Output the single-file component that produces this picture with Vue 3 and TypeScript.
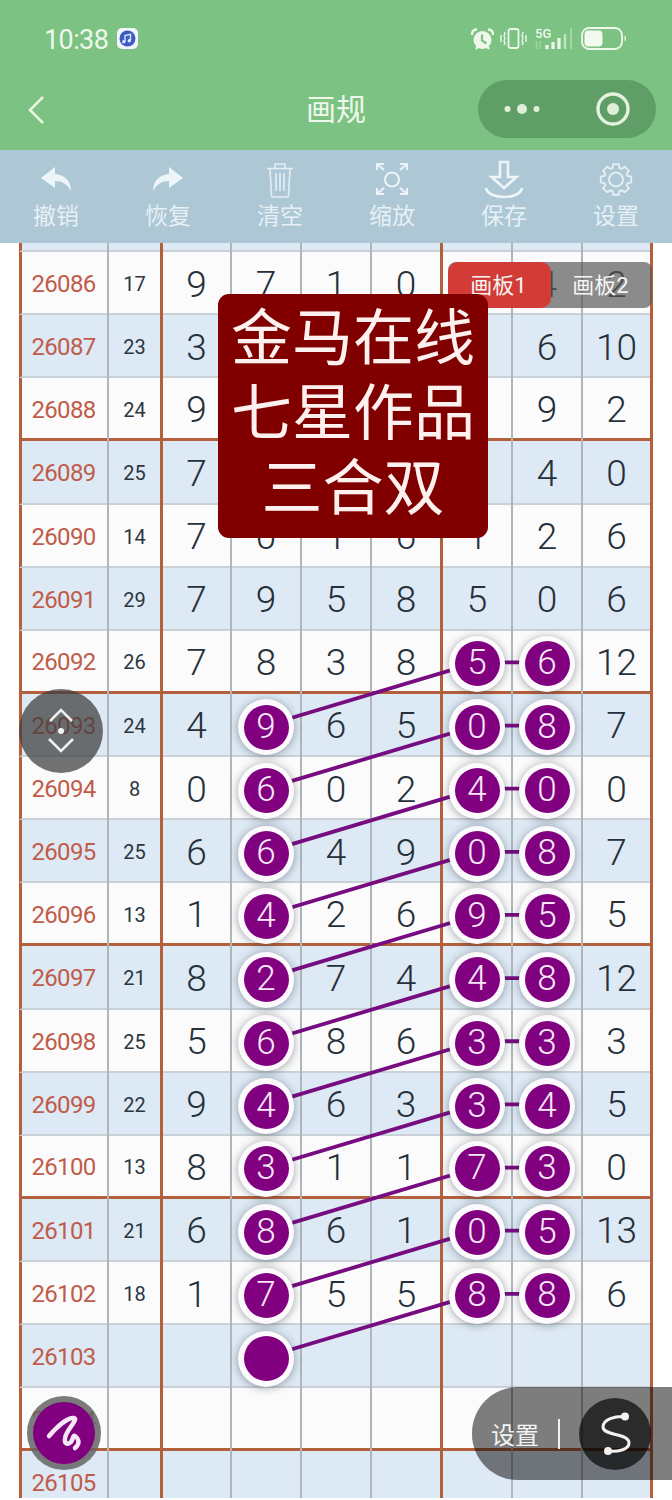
<script setup lang="ts">
import { computed } from 'vue'

interface Row { id: string; sum: string; vals: string[]; balls: number[] }

const raw: [string, string, string[], number[]][] = [
  ['26086', '17', ['9', '7', '1', '0', '', '4', '2'], []],
  ['26087', '23', ['3', '', '', '', '', '6', '10'], []],
  ['26088', '24', ['9', '', '', '', '', '9', '2'], []],
  ['26089', '25', ['7', '', '', '', '', '4', '0'], []],
  ['26090', '14', ['7', '0', '1', '6', '1', '2', '6'], []],
  ['26091', '29', ['7', '9', '5', '8', '5', '0', '6'], []],
  ['26092', '26', ['7', '8', '3', '8', '5', '6', '12'], [4, 5]],
  ['26093', '24', ['4', '9', '6', '5', '0', '8', '7'], [1, 4, 5]],
  ['26094', '8', ['0', '6', '0', '2', '4', '0', '0'], [1, 4, 5]],
  ['26095', '25', ['6', '6', '4', '9', '0', '8', '7'], [1, 4, 5]],
  ['26096', '13', ['1', '4', '2', '6', '9', '5', '5'], [1, 4, 5]],
  ['26097', '21', ['8', '2', '7', '4', '4', '8', '12'], [1, 4, 5]],
  ['26098', '25', ['5', '6', '8', '6', '3', '3', '3'], [1, 4, 5]],
  ['26099', '22', ['9', '4', '6', '3', '3', '4', '5'], [1, 4, 5]],
  ['26100', '13', ['8', '3', '1', '1', '7', '3', '0'], [1, 4, 5]],
  ['26101', '21', ['6', '8', '6', '1', '0', '5', '13'], [1, 4, 5]],
  ['26102', '18', ['1', '7', '5', '5', '8', '8', '6'], [1, 4, 5]],
  ['26103', '', ['', '', '', '', '', '', ''], [1]],
  ['26104', '', ['', '', '', '', '', '', ''], []],
  ['26105', '', ['', '', '', '', '', '', ''], []],
]

const rows: Row[] = raw.map(([id, sum, vals, balls]) => ({ id, sum, vals, balls }))
const ROW_H = 63.14
const TOP = 9
const cy = (i: number) => TOP + i * ROW_H + ROW_H / 2

const links = computed(() => {
  const out: { x1: number; y1: number; x2: number; y2: number }[] = []
  rows.forEach((r, i) => {
    if (r.balls.includes(4)) {
      out.push({ x1: 477, y1: cy(i), x2: 547, y2: cy(i) })
      out.push({ x1: 266, y1: cy(i + 1), x2: 477, y2: cy(i) })
    }
  })
  return out
})

const isBlue = (i: number) => i % 2 === 1
const isEnd = (id: string) => ['26088', '26092', '26096', '26100', '26104'].includes(id)

const tools = ['撤销', '恢复', '清空', '缩放', '保存', '设置']

const gear = computed(() => {
  const c = 16, n = 8
  let d = ''
  for (let k = 0; k < n; k++) {
    const a = (k / n) * Math.PI * 2 - Math.PI / 2
    const w = 0.19, s = 0.3
    const pts: [number, number][] = [
      [a - s, 12], [a - w, 15.5], [a + w, 15.5], [a + s, 12],
    ]
    pts.forEach(([t, r], j) => {
      const x = (c + Math.cos(t) * r).toFixed(1)
      const y = (c + Math.sin(t) * r).toFixed(1)
      d += (k === 0 && j === 0 ? 'M' : 'L') + x + ' ' + y + ' '
    })
  }
  return d + 'Z'
})
</script>

<template>
  <div class="page">
    <header class="top">
      <div class="status">
        <span class="time">10:38</span>
        <svg class="music" width="21" height="21" viewBox="0 0 21 21">
          <rect width="21" height="21" rx="5" fill="#f2f5fb" />
          <circle cx="10.5" cy="10.5" r="8" fill="#3d5cc0" />
          <path d="M8 13.5V7.500l5.500-1.200v6" fill="none" stroke="#dfe7fa" stroke-width="1.400" />
          <circle cx="6.800" cy="13.800" r="1.700" fill="#dfe7fa" />
          <circle cx="12.300" cy="12.800" r="1.700" fill="#dfe7fa" />
        </svg>
        <div class="status-right">
          <svg class="alarm" width="23" height="22" viewBox="0 0 23 22">
            <circle cx="11.5" cy="12" r="9" fill="#eef7ea" />
            <path d="M11 6.500v6l4.500 3" fill="none" stroke="#7bc283" stroke-width="2.200" />
            <path d="M1 7C1 3 3 1.500 6 1.500M22 7c0-4-2-5.500-5-5.500M5 21l2.500-3M18 21l-2.500-3" stroke="#eef7ea" stroke-width="2.400" fill="none" />
          </svg>
          <svg width="27" height="21" viewBox="0 0 27 21">
            <rect x="8.500" y="1" width="10" height="19" rx="2" fill="none" stroke="#eef7ea" stroke-width="1.800" />
            <path d="M4.500 4c1.500 2 -1.500 3 0 5s-1.500 3 0 5 -1 2 0 3M1 7v7M22.500 4c1.500 2 -1.500 3 0 5s-1.500 3 0 5 -1 2 0 3M26 7v7" fill="none" stroke="#eef7ea" stroke-width="1.400" />
          </svg>
          <div class="net">
            <span class="fiveg">5G</span>
            <svg width="38" height="22" viewBox="0 0 38 22">
              <path d="M1.500 13v8M5 13v8" stroke="#a6d6a6" stroke-width="1.400" />
              <path d="M12 21v-4M18 21v-7M24 21v-11" stroke="#eef7ea" stroke-width="3.200" />
              <path d="M30 21V6" stroke="#c2e3bf" stroke-width="2.400" />
              <path d="M36 21V0" stroke="#a6d6a6" stroke-width="2" />
            </svg>
          </div>
          <svg width="46" height="23" viewBox="0 0 46 23">
            <rect x="1" y="1" width="40" height="21" rx="7" fill="none" stroke="#eef7ea" stroke-width="1.800" />
            <rect x="3.500" y="3.500" width="18" height="16" rx="4" fill="#f4f9f0" />
            <path d="M43.500 8.500c2 1 2 5 0 6z" fill="#eef7ea" />
          </svg>
        </div>
      </div>
      <nav class="nav">
        <svg class="back" width="18" height="30" viewBox="0 0 18 30">
          <path d="M16 2 3 15l13 13" fill="none" stroke="#e8f6df" stroke-width="2.600" />
        </svg>
        <span class="title">画规</span>
        <div class="capsule">
          <svg width="36" height="12" viewBox="0 0 36 12">
            <circle cx="3.500" cy="6" r="3" fill="#dff0d8" />
            <circle cx="18" cy="6" r="5" fill="#dff0d8" />
            <circle cx="32.500" cy="6" r="3" fill="#dff0d8" />
          </svg>
          <svg width="34" height="34" viewBox="0 0 34 34">
            <circle cx="17" cy="17" r="15" fill="none" stroke="#e5f2de" stroke-width="3.400" />
            <circle cx="17" cy="17" r="6" fill="#dff0d8" />
          </svg>
        </div>
      </nav>
    </header>

    <div class="toolbar">
      <div v-for="(t, i) in tools" :key="t" class="tool">
        <svg class="tool-icon" width="40" height="40" viewBox="0 0 40 40">
          <path v-if="i === 0" d="M5 18 19 7v7c11 1 16 8 16 17-4-7-9-10-16-10v7z" fill="#eef5f8" />
          <path v-else-if="i === 1" d="M35 18 21 7v7C10 15 5 22 5 31c4-7 9-10 16-10v7z" fill="#eef5f8" />
          <g v-else-if="i === 2" fill="none" stroke="#e4eff4" stroke-width="1.600">
            <path d="M15 8V4h10v4M7 8.500h26M10 9l1.500 26c0 1 1 2 2 2h13c1 0 2-1 2-2L30 9M16 13v18M20 13v18M24 13v18" />
          </g>
          <g v-else-if="i === 3" fill="none" stroke="#eaf3f7" stroke-width="2.200">
            <circle cx="20" cy="19.500" r="7" />
            <path d="M5 10V4h7M5 4l7 6M28 4h7v6M35 4l-7 6M5 28v6h7M5 34l7-6M35 28v6h-7M35 34l-7-6" />
          </g>
          <g v-else-if="i === 4" fill="none" stroke="#eef5f8" stroke-width="2.600">
            <path d="M16 2h8v15h8.500L20 28 7.500 17H16zM2 28c2 12 34 12 36 0" />
          </g>
          <g v-else fill="none" stroke="#e4eff4" stroke-width="1.900" transform="translate(4 3.500)">
            <path :d="gear" />
            <circle cx="16" cy="16" r="7" />
          </g>
        </svg>
        <span class="tool-label">{{ t }}</span>
      </div>
    </div>

    <main class="board">
      <div class="row stub blue">
        <div v-for="n in 9" :key="n" class="cell" :class="'c' + n"></div>
      </div>
      <div
        v-for="(r, i) in rows"
        :key="r.id"
        class="row"
        :class="{ blue: isBlue(i), end: isEnd(r.id) }"
      >
        <div class="cell c1 rid">{{ r.id }}</div>
        <div class="cell c2 sum">{{ r.sum }}</div>
        <div v-for="(v, k) in r.vals" :key="k" class="cell val" :class="'c' + (k + 3)">
          <span v-if="r.balls.includes(k)" class="ball"><span class="ball-in">{{ v }}</span></span>
          <template v-else>{{ v }}</template>
        </div>
      </div>
      <svg class="links" width="672" height="1257" viewBox="0 0 672 1257">
        <line
          v-for="(l, i) in links"
          :key="i"
          :x1="l.x1"
          :y1="l.y1"
          :x2="l.x2"
          :y2="l.y2"
          stroke="#760c80"
          stroke-width="3.800"
        />
      </svg>
    </main>

    <div class="tabs">
      <span class="tab on">画板1</span>
      <span class="tab">画板2</span>
    </div>

    <div class="banner">
      <div>金马在线</div>
      <div>七星作品</div>
      <div>三合双</div>
    </div>

    <div class="updown">
      <svg width="84" height="84" viewBox="0 0 84 84">
        <path d="M31 32l11-11 11 11M30 50l12 12 12-12" fill="none" stroke="#eef0f0" stroke-width="2.600" />
        <circle cx="42" cy="42" r="3" fill="#f4f4f4" />
      </svg>
    </div>

    <div class="brush">
      <div class="brush-in">
        <svg width="62" height="62" viewBox="0 0 62 62">
          <path d="M16 34C22 27 34 15 41 16 46 17 33 28 32 36 31 42 35 43 38 40 40 37 40 33 42 34 45 36 48 41 42 46" fill="none" stroke="#f6e6f6" stroke-width="4.500" stroke-linecap="round" stroke-linejoin="round" />
        </svg>
      </div>
    </div>

    <div class="setbar">
      <span class="set-text">设置</span>
      <span class="set-div"></span>
      <div class="s-btn">
        <svg width="72" height="72" viewBox="0 0 72 72">
          <path d="M46 18.500C36 18 24 21 24 29 24 38 50 35 50 45 50 52 38 54 29 53" fill="none" stroke="#f2f2f2" stroke-width="3" />
          <circle cx="46" cy="18.500" r="4" fill="#f2f2f2" />
          <circle cx="29" cy="53" r="4" fill="#f2f2f2" />
        </svg>
      </div>
    </div>
  </div>
</template>

<style>
html, body { margin: 0; background: #fff; }
</style>

<style scoped>
.page {
  position: relative;
  width: 672px;
  height: 1500px;
  overflow: hidden;
  background: #fff;
  font-family: Roboto, "Noto Sans CJK SC", sans-serif;
}
.top {
  height: 150px;
  background: #7bc283;
  display: flex;
  flex-direction: column;
  color: #eef7ea;
}
.status {
  height: 80px;
  display: flex;
  align-items: center;
  padding: 0 45px 3px 44px;
  box-sizing: border-box;
}
.time { font-size: 27px; letter-spacing: -0.6px; width: 73px; padding-top: 2px; }
.music { flex: none; }
.status-right { margin-left: auto; display: flex; align-items: center; gap: 8px; }
.alarm { margin-right: -2px; }
.net { position: relative; width: 38px; height: 22px; }
.fiveg { position: absolute; left: 0; top: -1px; font-size: 13px; font-weight: 500; line-height: 13px; z-index: 1; }
.net svg { display: block; }
.nav {
  position: relative;
  height: 70px;
  display: flex;
  align-items: flex-start;
  justify-content: space-between;
  padding: 0 16px 0 27px;
}
.back { margin-top: 15px; }
.title {
  position: absolute;
  left: 0;
  right: 0;
  top: 8px;
  text-align: center;
  font-size: 30px;
  line-height: 44px;
}
.capsule {
  width: 178px;
  height: 58px;
  border-radius: 29px;
  background: #5f9e66;
  display: flex;
  align-items: center;
  justify-content: space-between;
  padding: 0 26px 0 26px;
  box-sizing: border-box;
}
.toolbar {
  height: 93px;
  background: #adc7d5;
  display: grid;
  grid-template-columns: repeat(6, 112px);
}
.tool { display: flex; flex-direction: column; align-items: center; padding-top: 10px; }
.tool-icon { display: block; }
.tool-label { font-size: 23px; line-height: 32px; color: #e6f0f5; margin-top: 1px; }

.board { position: relative; height: 1255px; overflow: hidden; }
.row {
  height: 63.14px;
  box-sizing: border-box;
  margin-left: 19px;
  width: 634px;
  display: grid;
  grid-template-columns: 87px 54px 69px 70px 70px 71px 70px 70px 70px;
  background: #fbfbfb;
  border-left: 3px solid #b5603c;
  border-bottom: 2px solid #c9d1d7;
}
.row.stub { height: 9px; }
.row.blue { background: #dde9f4; }
.row.end { border-bottom: 3px solid #b5603c; }
.cell {
  box-sizing: border-box;
  border-right: 2px solid #aeb6bc;
  display: flex;
  align-items: center;
  justify-content: center;
  min-width: 0;
  margin-bottom: -3px;
}
.c2, .c6, .c9 { border-right: 3px solid #b5603c; }
.rid { font-size: 24px; color: #c05c4a; letter-spacing: -0.7px; padding-right: 2px; }
.sum { font-size: 20px; color: #2b3640; }
.val { font-size: 37px; font-weight: 350; color: #25303a; }
.ball {
  position: relative;
  z-index: 2;
  width: 56px;
  height: 56px;
  margin-top: 3px;
  border-radius: 50%;
  background: #fdfafd;
  box-shadow: 0 1px 9px rgba(40, 50, 60, 0.45);
  display: flex;
  align-items: center;
  justify-content: center;
}
.ball-in {
  width: 45px;
  height: 45px;
  border-radius: 50%;
  background: #800080;
  color: #f6e8f6;
  font-size: 35px;
  font-weight: 350;
  line-height: 44px;
  text-align: center;
}
.links { position: absolute; left: 0; top: 0; z-index: 1; pointer-events: none; }

.tabs {
  position: absolute;
  left: 448px;
  top: 262px;
  width: 204px;
  height: 46px;
  display: flex;
  border-radius: 8px;
  background: rgba(85, 85, 85, 0.68);
  color: #f5f5f5;
  font-size: 22px;
}
.tab {
  flex: 1;
  display: flex;
  align-items: center;
  justify-content: center;
  border-radius: 10px;
  padding: 0 2px 4px 0;
}
.tab.on { flex: none; width: 103px; box-sizing: border-box; background: #d33b36; }
.banner {
  position: absolute;
  left: 218px;
  top: 294px;
  width: 270px;
  height: 244px;
  box-sizing: border-box;
  padding-top: 8px;
  border-radius: 11px;
  background: #800000;
  color: #fdf0ee;
  font-size: 61px;
  line-height: 75px;
  text-align: center;
}
.updown {
  position: absolute;
  left: 19px;
  top: 689px;
  width: 84px;
  height: 84px;
  border-radius: 50%;
  background: rgba(60, 60, 60, 0.72);
}
.updown svg { display: block; }
.brush {
  position: absolute;
  left: 27px;
  top: 1396px;
  width: 74px;
  height: 74px;
  border-radius: 50%;
  background: rgba(100, 100, 100, 0.85);
  display: flex;
  align-items: center;
  justify-content: center;
}
.brush-in {
  width: 62px;
  height: 62px;
  border-radius: 50%;
  background: #800080;
}
.brush-in svg { display: block; }
.setbar {
  position: absolute;
  left: 472px;
  right: 0;
  top: 1387px;
  height: 93px;
  border-radius: 46px 0 0 46px;
  background: rgba(0, 0, 0, 0.5);
  display: flex;
  align-items: center;
  color: #f2f2f2;
}
.set-text { font-size: 24px; margin-left: 19px; }
.set-div { width: 2px; height: 30px; background: #f2f2f2; margin-left: 19px; }
.s-btn {
  width: 72px;
  height: 72px;
  margin-left: 19px;
  border-radius: 50%;
  background: rgba(0, 0, 0, 0.65);
}
.s-btn svg { display: block; }
</style>
